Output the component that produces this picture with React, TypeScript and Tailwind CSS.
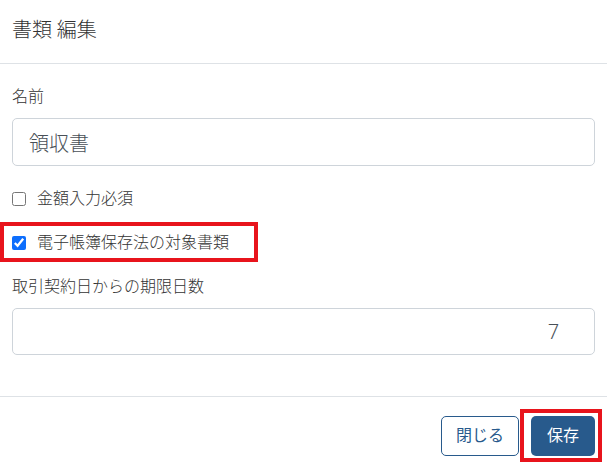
import React from 'react';

const App: React.FC = () => {
  const [name, setName] = React.useState('領収書');
  const [days, setDays] = React.useState('7');
  const [amountRequired, setAmountRequired] = React.useState(false);
  const [ebookTarget, setEbookTarget] = React.useState(true);

  return (
    <div className="w-[607px] h-[466px] overflow-hidden bg-white text-[#333] font-[Roboto,'Noto_Sans_CJK_JP',sans-serif]">
      {/* Header */}
      <header className="px-3 pt-[15px] pb-[18px] border-b border-[#dee2e6]">
        <h1 className="text-[20px] leading-[30px] font-light">書類 編集</h1>
      </header>

      {/* Body */}
      <main className="px-3 pt-[21px] pb-[41px]">
        <label className="block text-[16px] leading-6 mb-[9px] font-light">名前</label>
        <input
          value={name}
          onChange={(e) => setName(e.target.value)}
          className="block w-full h-[48px] px-4 text-[20px] font-light text-[#495057] border border-[#ced4da] rounded-[5px] outline-none"
        />

        <div className="flex items-center h-6 mt-[21px]">
          <input
            type="checkbox"
            checked={amountRequired}
            onChange={(e) => setAmountRequired(e.target.checked)}
            className="w-[14px] h-[14px] m-0 accent-[#0d6efd]"
          />
          <span className="ml-[11px] text-[16px] leading-6 font-light">金額入力必須</span>
        </div>

        <div className="relative flex items-center h-6 mt-5">
          <input
            type="checkbox"
            checked={ebookTarget}
            onChange={(e) => setEbookTarget(e.target.checked)}
            className="w-[14px] h-[14px] m-0 accent-[#0d6efd]"
          />
          <span className="ml-[11px] text-[16px] leading-6 font-light">電子帳簿保存法の対象書類</span>
          <div className="absolute left-[-12px] top-[-9px] w-[258px] h-[40px] border-4 border-[#e8141c] pointer-events-none" />
        </div>

        <label className="block text-[16px] leading-6 mt-5 mb-[9px] font-light">取引契約日からの期限日数</label>
        <input
          type="text"
          value={days}
          onChange={(e) => setDays(e.target.value)}
          className="block w-full h-[47px] pl-4 pr-[35px] text-right text-[20px] font-light text-[#495057] border border-[#ced4da] rounded-[5px] outline-none"
        />
      </main>

      {/* Footer */}
      <footer className="flex justify-end gap-3 px-3 pt-[19px] border-t border-[#dee2e6]">
        <button className="w-[78px] h-10 text-[16px] text-[#285a8c] border border-[#285a8c] rounded-[5px] bg-white">
          閉じる
        </button>
        <div className="relative">
          <button className="w-[64px] h-10 text-[16px] text-white bg-[#285a8c] rounded-[5px]">
            保存
          </button>
          <div className="absolute left-[-11px] top-[-7px] w-[82px] h-[53px] border-4 border-[#e8141c] pointer-events-none" />
        </div>
      </footer>
    </div>
  );
};

export default App;
